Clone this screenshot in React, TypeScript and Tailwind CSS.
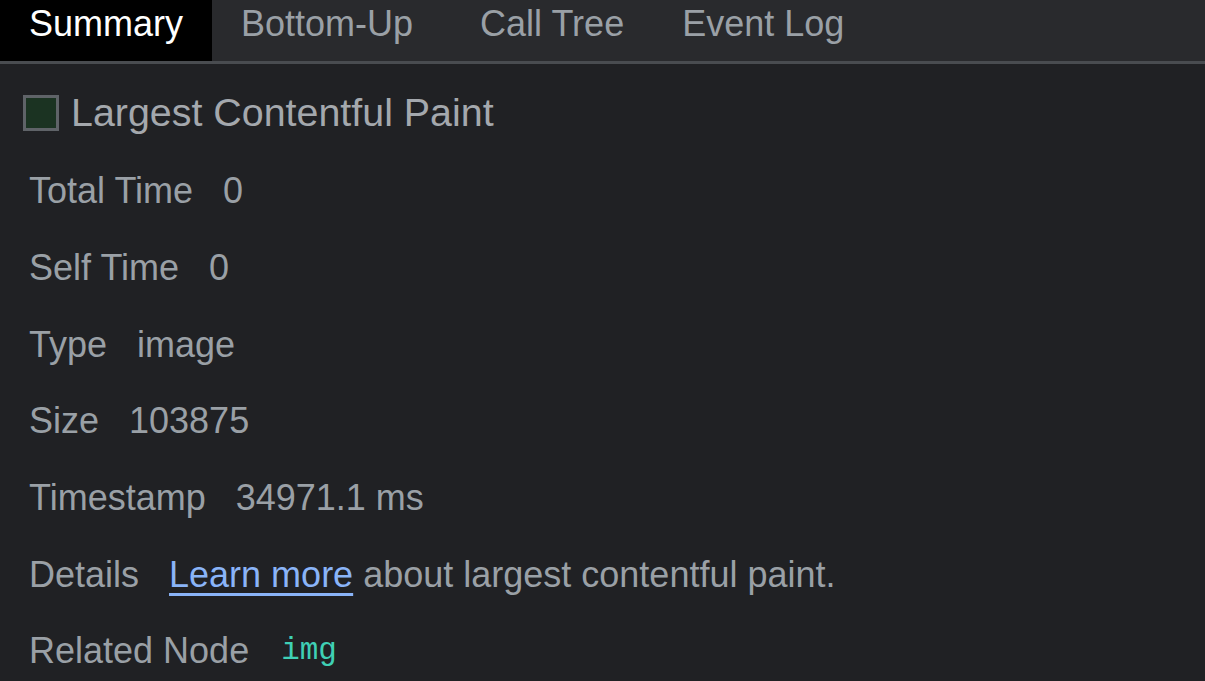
const tabs = ["Summary", "Bottom-Up", "Call Tree", "Event Log"];

function Row({ label, children }: { label: string; children: React.ReactNode }) {
    return (
        <div className="flex items-center h-[76.7px] pl-[29px] whitespace-nowrap">
            <span className="mr-[30px]">{label}</span>
            {children}
        </div>
    );
}

export default function App() {
    return (
        <div
            className="w-[1205px] h-[681px] overflow-hidden bg-[#202124] text-[#9aa0a6] text-[36px]"
            style={{ fontFamily: '"Liberation Sans", Arial, sans-serif' }}
        >
            {/* Tab strip */}
            <div className="flex h-[64px] bg-[#292a2d] border-b-[3px] border-[#494c50]">
                {tabs.map((t, i) => (
                    <div
                        key={t}
                        className={`pl-[29px] pt-[2px] leading-[44px] h-[61px] ${
                            i === 1 ? "pr-[38px]" : "pr-[29px]"
                        } ${i === 0 ? "bg-black text-white" : "text-[#9aa0a6]"}`}
                    >
                        {t}
                    </div>
                ))}
            </div>

            {/* Title */}
            <div className="flex items-center h-[89px] pt-2 pl-[23px]">
                <div className="w-[36px] h-[36px] border-[3px] border-[#5f6368] bg-[#1b3322] mr-[12px]" />
                <span className="text-[39.4px] text-[#a4a8ad]">Largest Contentful Paint</span>
            </div>

            <Row label="Total Time">
                <span>0</span>
            </Row>
            <Row label="Self Time">
                <span>0</span>
            </Row>
            <Row label="Type">
                <span>image</span>
            </Row>
            <Row label="Size">
                <span>103875</span>
            </Row>
            <Row label="Timestamp">
                <span>34971.1 ms</span>
            </Row>
            <Row label="Details">
                <span>
                    <a className="text-[#8ab4f8] underline decoration-[3px] underline-offset-[6px] cursor-pointer">
                        Learn more
                    </a>{" "}
                    about largest contentful paint.
                </span>
            </Row>
            <Row label="Related Node">
                <span
                    className="text-[#3fd0b5] text-[31px] ml-[2px]"
                    style={{ fontFamily: '"Liberation Mono", "DejaVu Sans Mono", monospace' }}
                >
                    img
                </span>
            </Row>
        </div>
    );
}
